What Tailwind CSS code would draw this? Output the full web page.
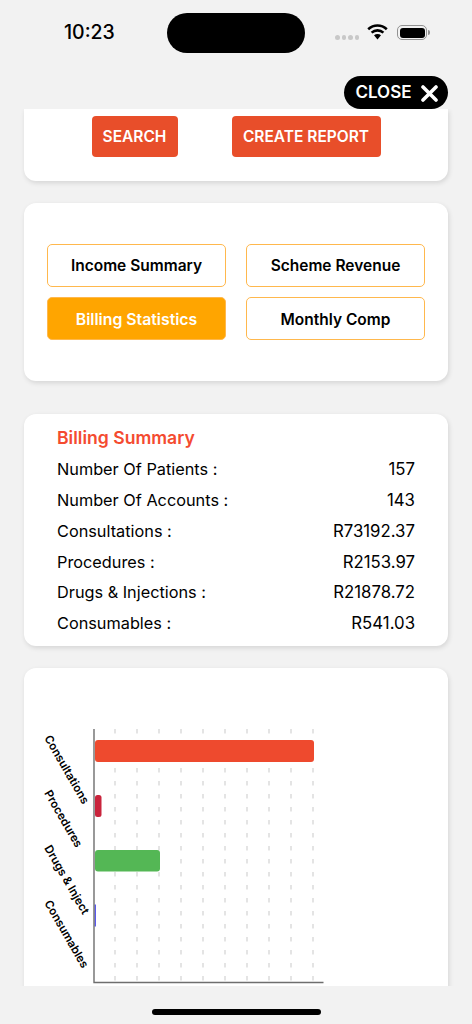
<!DOCTYPE html>
<html lang="en">

<head>
    <meta charset="UTF-8">
    <meta name="viewport" content="width=device-width, initial-scale=1.0">
    <title>Billing Statistics</title>
    <script src="https://cdn.jsdelivr.net/npm/@tailwindcss/browser@4"></script>
</head>

<body class="bg-[#f2f2f2] font-['Inter',sans-serif] text-black">
    <div class="relative flex h-[1024px] w-[472px] flex-col overflow-hidden">

        <!-- status bar -->
        <div class="flex h-[109px] shrink-0 items-start">
            <div class="ml-[64px] mt-[20px] w-[103px] text-[19.5px] leading-[24px] font-medium">10:23</div>
            <div class="mt-[13px] h-[40px] w-[138px] rounded-[20px] bg-black"></div>
            <div class="ml-[30px] mt-[35px] flex w-[24px] justify-between">
                <span class="size-[4.5px] rounded-full bg-[#c8c8c8]"></span>
                <span class="size-[4.5px] rounded-full bg-[#c8c8c8]"></span>
                <span class="size-[4.5px] rounded-full bg-[#c8c8c8]"></span>
                <span class="size-[4.5px] rounded-full bg-[#c8c8c8]"></span>
            </div>
            <svg class="ml-[8px] mt-[24px]" width="21" height="16" viewBox="0 0 21 16" fill="none">
                <path d="M1.2 5.2C6.6 0.3 14.4 0.3 19.8 5.2" stroke="#000" stroke-width="2.6" />
                <path d="M4.6 8.6C8 5.6 13 5.6 16.4 8.6" stroke="#000" stroke-width="2.6" />
                <path d="M7 11.2C9 9.7 12 9.7 14 11.2L10.5 15.6Z" fill="#000" />
            </svg>
            <div class="ml-[9px] mt-[25px] flex items-center">
                <div class="h-[15px] w-[30px] rounded-[5px] border-[1.5px] border-[#929292] p-[1.5px]">
                    <div class="h-full w-full rounded-[3px] bg-black"></div>
                </div>
                <div class="ml-[1px] h-[5px] w-[1.5px] rounded-r bg-[#929292]"></div>
            </div>
        </div>

        <!-- close pill -->
        <button class="absolute right-[24px] top-[76px] flex h-[33px] w-[104px] items-center justify-center gap-[9px] rounded-full bg-black pl-[1px] pt-[1px] text-[17px] font-semibold text-white">
            CLOSE
            <svg width="17" height="17" viewBox="0 0 17 17" fill="none">
                <path d="M2 2L15 15M15 2L2 15" stroke="#fff" stroke-width="3.6" stroke-linecap="round" />
            </svg>
        </button>

        <!-- scroll area -->
        <div class="h-[877px] shrink-0 overflow-hidden px-[24px]">

            <div class="flex h-[72px] justify-center gap-[54px] rounded-b-[12px] bg-white pt-[7px] shadow-[1px_2px_5px_rgba(0,0,0,0.12)]">
                <button class="h-[41px] w-[86px] rounded-[4px] bg-[#e84e2a] text-[15.5px] font-semibold text-white">SEARCH</button>
                <button class="h-[41px] w-[149px] rounded-[4px] bg-[#e84e2a] text-[15.5px] font-semibold text-white">CREATE REPORT</button>
            </div>

            <div class="mt-[22px] grid h-[178px] grid-cols-2 content-center gap-x-[20px] gap-y-[10px] rounded-[12px] bg-white px-[23px] shadow-[1px_2px_5px_rgba(0,0,0,0.12)]">
                <button class="h-[43px] rounded-[5px] border-[1.5px] border-[#ffb84d] text-[15.5px] font-semibold">Income Summary</button>
                <button class="h-[43px] rounded-[5px] border-[1.5px] border-[#ffb84d] text-[15.5px] font-semibold">Scheme Revenue</button>
                <button class="h-[43px] rounded-[5px] border-[1.5px] border-[#ffb84d] bg-[#ffa500] pt-[2px] text-[15.8px] font-semibold text-white">Billing Statistics</button>
                <button class="h-[43px] rounded-[5px] border-[1.5px] border-[#ffb84d] pt-[2px] text-[15.5px] font-semibold">Monthly Comp</button>
            </div>

            <div class="mt-[33px] h-[232px] rounded-[12px] bg-white pl-[33px] pr-[33px] pt-[12px] shadow-[1px_2px_5px_rgba(0,0,0,0.12)]">
                <div class="mb-[4px] text-[17.6px] leading-[24px] font-semibold text-[#f44b30]">Billing Summary</div>
                <div class="flex h-[30.8px] items-center justify-between text-[16.3px]"><span>Number Of Patients :</span><span class="pt-[1px] text-[16.8px]">157</span></div>
                <div class="flex h-[30.8px] items-center justify-between text-[16.3px]"><span>Number Of Accounts :</span><span class="pt-[1px] text-[16.8px]">143</span></div>
                <div class="flex h-[30.8px] items-center justify-between text-[16.3px]"><span>Consultations :</span><span class="pt-[1px] text-[16.8px]">R73192.37</span></div>
                <div class="flex h-[30.8px] items-center justify-between text-[16.3px]"><span>Procedures :</span><span class="pt-[1px] text-[16.8px]">R2153.97</span></div>
                <div class="flex h-[30.8px] items-center justify-between text-[16.3px]"><span>Drugs &amp; Injections :</span><span class="pt-[1px] text-[16.8px]">R21878.72</span></div>
                <div class="flex h-[30.8px] items-center justify-between text-[16.3px]"><span>Consumables :</span><span class="pt-[1px] text-[16.8px]">R541.03</span></div>
            </div>

            <!-- chart, drawn in page coordinates -->
            <div class="mt-[22px] h-[330px] rounded-[12px] bg-white shadow-[1px_2px_5px_rgba(0,0,0,0.12)]">
                <svg width="424" height="318" viewBox="24 668 424 318">
                    <g stroke="#c9c9c9" stroke-width="1" stroke-dasharray="4.5 8.5">
                        <path d="M115 729V982" />
                        <path d="M137 729V982" />
                        <path d="M159 729V982" />
                        <path d="M181 729V982" />
                        <path d="M203 729V982" />
                        <path d="M225 729V982" />
                        <path d="M247 729V982" />
                        <path d="M269 729V982" />
                        <path d="M291 729V982" />
                        <path d="M313 729V982" />
                    </g>
                    <rect x="95" y="740" width="219" height="22" rx="3" fill="#ee4a2e" />
                    <rect x="95" y="795" width="6.5" height="22" rx="2.5" fill="#c9243c" />
                    <rect x="95" y="850" width="65" height="21.5" rx="3" fill="#54b755" />
                    <rect x="94.5" y="904.5" width="1.5" height="22" fill="#5a5af0" />
                    <path d="M94 729V982.5H323.5" fill="none" stroke="#6e6e6e" stroke-width="1.4" />
                    <g font-family="Inter, sans-serif" font-size="11.5" font-weight="600" fill="#000">
                        <text transform="translate(44 738) rotate(60)">Consultations</text>
                        <text transform="translate(44 793) rotate(60)">Procedures</text>
                        <text transform="translate(44 848) rotate(60)">Drugs &amp; Inject</text>
                        <text transform="translate(44 903) rotate(60)">Consumables</text>
                    </g>
                </svg>
            </div>
        </div>

        <!-- home indicator -->
        <div class="mx-auto mt-[23px] h-[6px] w-[169px] rounded-full bg-black"></div>
    </div>
</body>

</html>
